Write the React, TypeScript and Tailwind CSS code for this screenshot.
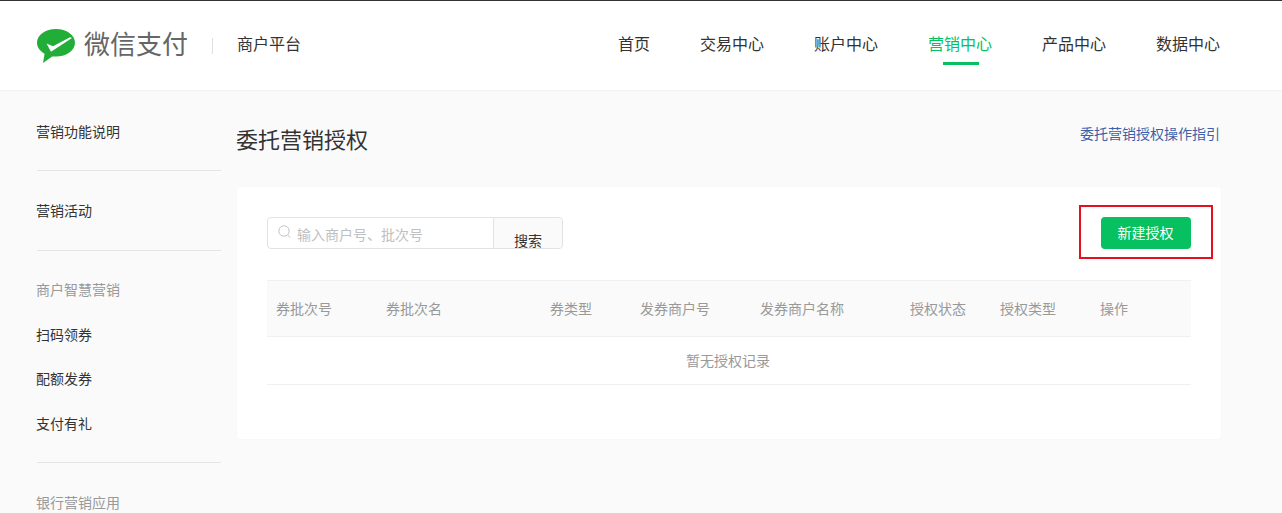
const navItems = ["首页", "交易中心", "账户中心", "营销中心", "产品中心", "数据中心"];
const columns = ["券批次号", "券批次名", "券类型", "发券商户号", "发券商户名称", "授权状态", "授权类型", "操作"];

const Logo = () => (
  <svg width="38" height="34" viewBox="0 0 38 34" className="shrink-0">
    <path
      d="M19 0C8.500 0 0 6.100 0 13.700c0 4.500 3 8.500 7.600 11L6 34l9.200-6.600c1.200 0.100 2.500 0.200 3.800 0.200 10.500 0 19-6.200 19-13.900S29.500 0 19 0z"
      fill="#22ac38"
    />
    <path d="M9.500 14.500l6.500 2.800L33 8.200l2 0.800L14 22.800z" fill="#ffffff" />
  </svg>
);

const SideLink = ({ children, className = "" }: { children: string; className?: string }) => (
  <div className={`-ml-px text-sm leading-5 text-[#333] ${className}`}>{children}</div>
);

const App = () => {
  return (
    <div
      className="h-[513px] overflow-hidden bg-[#fafafa]"
      style={{ fontFamily: '"Noto Sans CJK SC", "Liberation Sans", sans-serif' }}
    >
      <header className="flex h-[91px] items-center justify-between border-t border-b border-t-[#333] border-b-[#f2f2f2] bg-white pl-[37px] pr-[61px]">
        <div className="flex items-center">
          <Logo />
          <span className="mb-[6px] ml-[9px] text-[26px] leading-none text-[#666]">微信支付</span>
          <span className="ml-[24px] h-4 w-px bg-[#e0e0e0]" />
          <span className="mb-[5px] ml-[24px] text-base leading-none text-[#333]">商户平台</span>
        </div>
        <nav className="mb-[6px] mr-px flex gap-[50px]">
          {navItems.map((item) => (
            <a
              key={item}
              className={`relative text-base leading-[24px] ${item === "营销中心" ? "text-[#07c160]" : "text-[#333]"}`}
            >
              {item}
              {item === "营销中心" && (
                <span className="absolute left-[15px] top-[31px] h-[3px] w-9 bg-[#07c160]" />
              )}
            </a>
          ))}
        </nav>
      </header>

      <div className="flex pl-[37px] pr-[61px]">
        <aside className="w-[184px] shrink-0 pt-[30px]">
          <SideLink>营销功能说明</SideLink>
          <div className="mt-[29px] border-t border-[#e5e5e5]" />
          <SideLink className="mt-[29px]">营销活动</SideLink>
          <div className="mt-[30px] border-t border-[#e5e5e5]" />
          <div className="-ml-px mt-[28px] text-sm leading-5 text-[#999]">商户智慧营销</div>
          <SideLink className="mt-[25px]">扫码领券</SideLink>
          <SideLink className="mt-[24px]">配额发券</SideLink>
          <SideLink className="mt-[25px]">支付有礼</SideLink>
          <div className="mt-[29px] border-t border-[#e5e5e5]" />
          <div className="-ml-px mt-[29px] text-sm leading-5 text-[#999]">银行营销应用</div>
        </aside>

        <main className="ml-4 flex-1">
          <div className="flex items-start justify-between pt-[31px]">
            <h1 className="-ml-px text-[22px] leading-[32px] font-normal text-[#333]">委托营销授权</h1>
            <a className="mr-px mt-[1px] text-sm leading-5 text-[#3f5fa8]">委托营销授权操作指引</a>
          </div>

          <section className="mt-[33px] h-[252px] rounded-sm bg-white px-[30px] pt-[30px] shadow-[0_0_2px_rgba(0,0,0,0.04)]">
            <div className="flex items-start justify-between">
              <div className="flex h-8 w-[296px] rounded-[4px] border border-[#e2e2e2]">
                <div className="flex flex-1 items-center pl-[10px]">
                  <svg width="13" height="14" viewBox="0 0 13 14" fill="none" stroke="#c4c4c4" strokeWidth="1" className="mb-[2px]">
                    <circle cx="6" cy="6" r="5.200" />
                    <path d="M9.800 10l2.200 2.600" />
                  </svg>
                  <span className="ml-[6px] pt-px text-sm leading-none text-[#c0c0c0]">输入商户号、批次号</span>
                </div>
                <button className="w-[69px] rounded-r-[4px] border-l border-[#e2e2e2] bg-[#fafafa] pt-[12px] text-sm leading-5 text-[#333]">
                  搜索
                </button>
              </div>
              <div className="relative">
                <button className="h-8 w-[90px] rounded-[4px] bg-[#07c160] pb-[3px] pr-px text-sm text-white">新建授权</button>
                <div className="absolute -left-[22px] -top-3 h-[54px] w-[134px] border-2 border-[#e60f1e]" />
              </div>
            </div>

            <div className="mt-[31px] grid h-[57px] grid-cols-[110px_164px_90px_120px_150px_90px_100px_1fr] items-center border-y border-[#f0f0f0] bg-[#fafafa] pb-[2px] pl-[9px] text-sm text-[#999]">
              {columns.map((column) => (
                <div key={column}>{column}</div>
              ))}
            </div>
            <div className="flex h-[48px] items-center justify-center border-b border-[#f0f0f0] pb-[2px] pr-[2px] text-sm text-[#999]">
              暂无授权记录
            </div>
          </section>
        </main>
      </div>
    </div>
  );
};

export default App;
